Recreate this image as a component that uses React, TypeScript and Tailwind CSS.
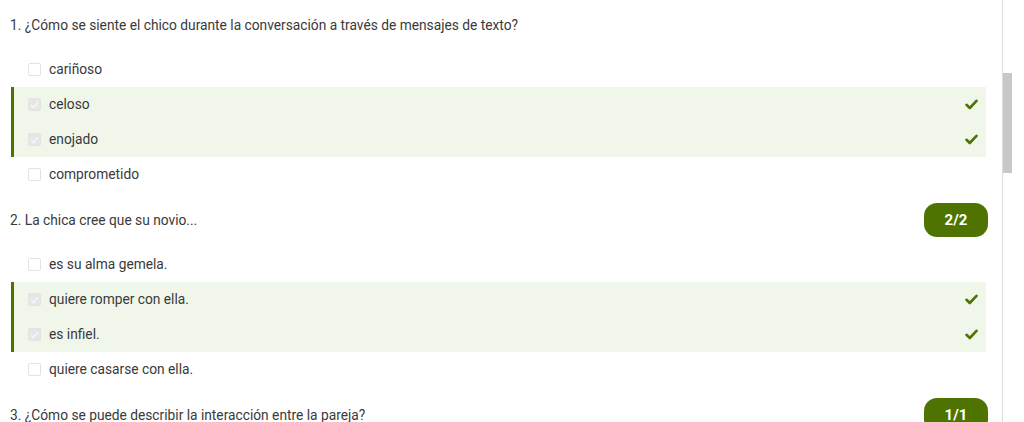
import React from "react";

type Option = { label: string; correct: boolean };
type Question = { title: string; score?: string; options: Option[] };

const questions: Question[] = [
	{
		title: "1. ¿Cómo se siente el chico durante la conversación a través de mensajes de texto?",
		options: [
			{ label: "cariñoso", correct: false },
			{ label: "celoso", correct: true },
			{ label: "enojado", correct: true },
			{ label: "comprometido", correct: false },
		],
	},
	{
		title: "2. La chica cree que su novio...",
		score: "2/2",
		options: [
			{ label: "es su alma gemela.", correct: false },
			{ label: "quiere romper con ella.", correct: true },
			{ label: "es infiel.", correct: true },
			{ label: "quiere casarse con ella.", correct: false },
		],
	},
	{
		title: "3. ¿Cómo se puede describir la interacción entre la pareja?",
		score: "1/1",
		options: [],
	},
];

const CheckMark = () => (
	<svg width="13" height="11" viewBox="0 0 13 11" className="shrink-0">
		<path d="M1.5 5.8 L4.8 9 L11.5 1.8" fill="none" stroke="#4f7300" strokeWidth="2.6" strokeLinecap="round" strokeLinejoin="round" />
	</svg>
);

const Box: React.FC<{ checked: boolean }> = ({ checked }) => (
	<div
		className={
			checked
				? "w-[13px] h-[13px] rounded-[2px] border border-[#e3e3e3] bg-[#e6e6e6] flex items-center justify-center shrink-0"
				: "w-[13px] h-[13px] rounded-[2px] border border-[#e3e3e3] bg-white shrink-0"
		}
	>
		{checked && (
			<svg width="9" height="8" viewBox="0 0 9 8">
				<path d="M1 4.2 L3.4 6.4 L8 1.4" fill="none" stroke="#f7f7f7" strokeWidth="1.5" />
			</svg>
		)}
	</div>
);

const OptionRow: React.FC<{ option: Option }> = ({ option }) => (
	<div
		className={
			option.correct
				? "h-[35px] flex items-center bg-[#f0f7ea] border-l-[3px] border-[#4f7300] pl-[14px] pr-[8px]"
				: "h-[35px] flex items-center pl-[17px] pr-[8px]"
		}
	>
		<Box checked={option.correct} />
		<span className="ml-[8px] text-[13.75px] text-[#3a3a3a]">{option.label}</span>
		<div className="flex-1" />
		{option.correct && <CheckMark />}
	</div>
);

export default function App() {
	return (
		<div className="w-[1024px] h-[422px] overflow-hidden bg-white flex" style={{ fontFamily: "Roboto, 'Liberation Sans', sans-serif" }}>
			<div className="w-[1002px] pl-[10px] pr-[14px] pt-[8px]">
				{questions.map((q, i) => (
					<div key={i} className="h-[195px]">
						<div className="h-[34px] flex items-center justify-between">
							<span className="text-[13.75px] text-[#3a3a3a]">{q.title}</span>
							{q.score && (
								<span className="h-[34px] w-[64px] rounded-[13px] bg-[#4f7300] text-white font-bold text-[15px] flex items-center justify-center">
									{q.score}
								</span>
							)}
						</div>
						<div className="mt-[10px] ml-[1px] mr-[2px]">
							{q.options.map((o, j) => (
								<OptionRow key={j} option={o} />
							))}
						</div>
					</div>
				))}
			</div>
			<div className="w-[10px] border-l border-[#dedede] bg-white">
				<div className="mt-[73px] h-[100px] bg-[#c8c8c8]" />
			</div>
			<div className="flex-1 bg-white" />
		</div>
	);
}
